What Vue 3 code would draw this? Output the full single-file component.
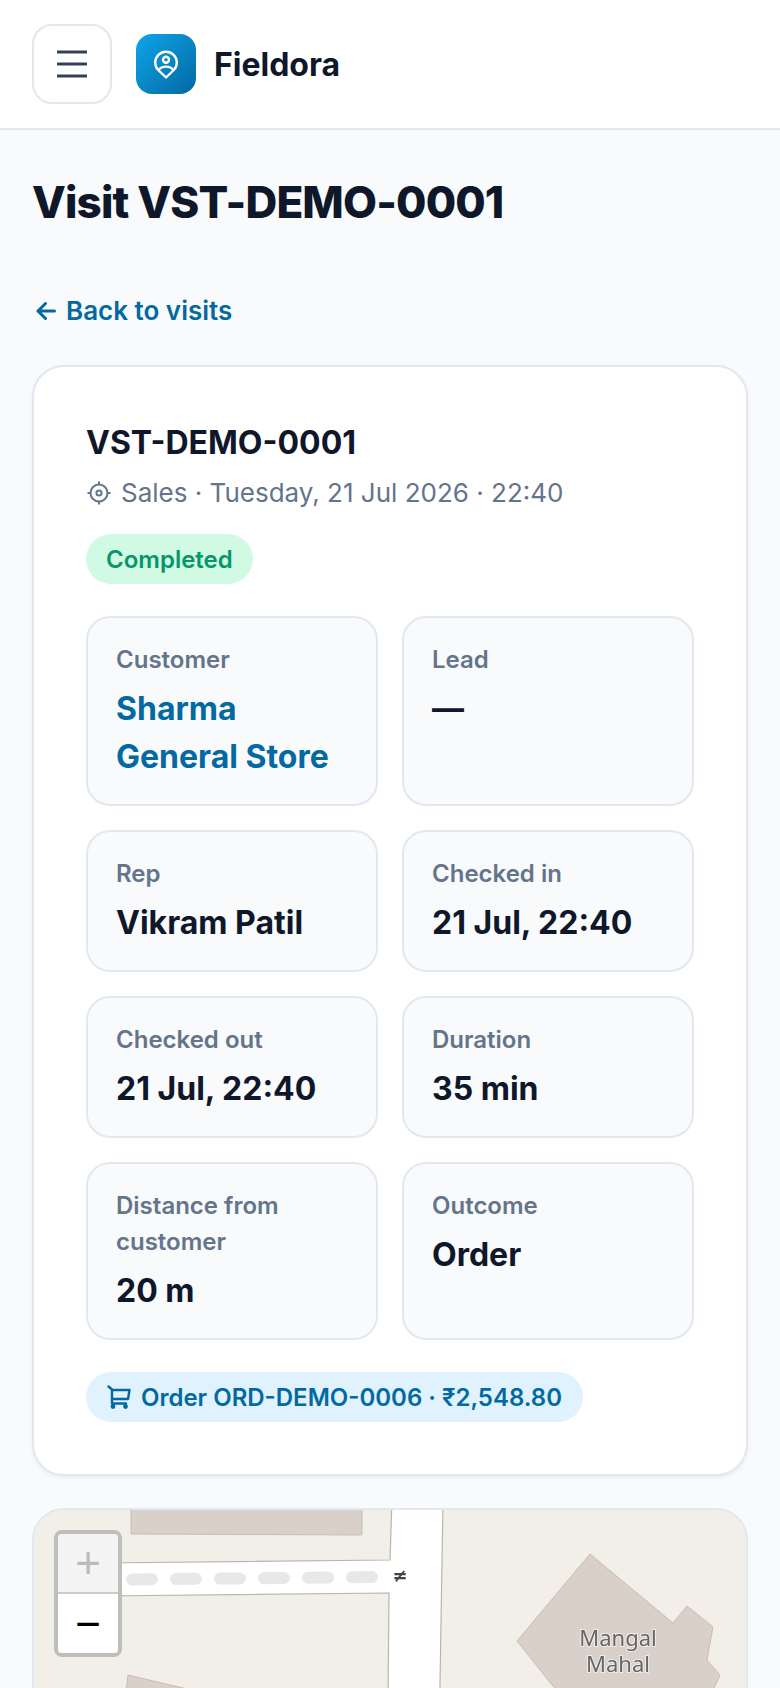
<template>
  <div class="app">
    <header class="topbar">
      <button class="menu-btn" aria-label="Menu">
        <svg width="30" height="28" viewBox="0 0 30 28">
          <path d="M0 2H30M0 14H30M0 26H30" fill="none" stroke="#334155" stroke-width="3.2" />
        </svg>
      </button>
      <div class="logo">
        <svg width="24" height="29" viewBox="0 0 24 29" fill="none" stroke="#fff" stroke-width="2.4" stroke-linejoin="round">
          <path d="M12 27.5L4.2 20A10.8 10.8 0 1 1 19.8 20Z" />
          <circle cx="12" cy="9.8" r="3" />
          <path d="M4.8 20C7.5 15.5 16.5 15.5 19.2 20" />
        </svg>
      </div>
      <span class="brand">Fieldora</span>
    </header>

    <main class="page">
      <h1 class="title">Visit VST-DEMO-0001</h1>
      <a class="back" href="#">
        <svg width="20" height="20" viewBox="0 0 20 20" fill="none" stroke="#0369a1" stroke-width="3" stroke-linecap="round" stroke-linejoin="round">
          <path d="M18.5 10H2M9.5 2.5L2 10L9.5 17.5" />
        </svg>
        Back to visits
      </a>

      <section class="card">
        <h2 class="ref">VST-DEMO-0001</h2>
        <p class="sub">
          <svg width="26" height="26" viewBox="0 0 26 26" fill="none" stroke="#64748b" stroke-width="2">
            <circle cx="13" cy="13" r="8.5" />
            <circle cx="13" cy="13" r="2.6" />
            <path d="M13 1.5V4.5M13 21.5V24.5M1.5 13H4.5M21.5 13H24.5" />
          </svg>
          Sales · Tuesday, 21 Jul 2026 · 22:40
        </p>
        <span class="status">Completed</span>

        <div class="facts">
          <div v-for="f in facts" :key="f.label" class="fact">
            <div class="fact-label">{{ f.label }}</div>
            <div class="fact-value" :class="{ link: f.link }">{{ f.value }}</div>
          </div>
        </div>

        <a class="order" href="#">
          <svg width="24" height="24" viewBox="0 0 24 24" fill="none" stroke="#0369a1" stroke-width="2.4" stroke-linecap="round" stroke-linejoin="round">
            <path d="M1.5 1.5L5 4.5V18.5H19" />
            <path d="M5 5H22.5L21 14H5" />
            <circle cx="6" cy="21.5" r="1.2" />
            <circle cx="18.5" cy="21.5" r="1.2" />
          </svg>
          Order ORD-DEMO-0006 · ₹2,548.80
        </a>
      </section>

      <section class="map">
        <svg class="tiles" width="716" height="300" viewBox="32 1508 716 300">
          <rect x="32" y="1508" width="716" height="300" fill="#f2efe9" />
          <path d="M131 1500H362V1535L131 1534Z" fill="#d9d0c9" stroke="#c9bdb3" />
          <path d="M100 1563L390 1560L392 1500H443L438 1808H387L389 1593L100 1596Z" fill="#fff" stroke="#b9b5ae" stroke-width="1.2" />
          <path d="M126 1579.5L377 1577" fill="none" stroke="#e8e8e8" stroke-width="12" stroke-linecap="round" stroke-dasharray="20 24" transform="translate(6 0)" />
          <path d="M590 1554L673 1623L687 1606L713 1627L707 1660L720 1675L700 1720H580L517 1641Z" fill="#d9d0c9" stroke="#c9bdb3" />
          <path d="M128 1675L200 1692L180 1740H120Z" fill="#d9d0c9" stroke="#c9bdb3" />
          <text x="400" y="1582" class="oneway">≠</text>
          <text x="618" y="1646" class="place">Mangal</text>
          <text x="618" y="1672" class="place">Mahal</text>
        </svg>
        <div class="zoom">
          <span class="zoom-btn off">+</span>
          <span class="zoom-btn">−</span>
        </div>
      </section>
    </main>
  </div>
</template>

<script setup>
const facts = [
  { label: 'Customer', value: 'Sharma General Store', link: true },
  { label: 'Lead', value: '—' },
  { label: 'Rep', value: 'Vikram Patil' },
  { label: 'Checked in', value: '21 Jul, 22:40' },
  { label: 'Checked out', value: '21 Jul, 22:40' },
  { label: 'Duration', value: '35 min' },
  { label: 'Distance from customer', value: '20 m' },
  { label: 'Outcome', value: 'Order' }
]
</script>

<style>
body {
  background: #f8fafc;
}
</style>

<style scoped>
.app {
  height: 1688px;
  overflow: hidden;
  font-family: Inter, "Noto Sans", sans-serif;
  color: #0f172a;
  background: #f8fafc;
}

.topbar {
  display: flex;
  align-items: center;
  height: 130px;
  box-sizing: border-box;
  padding: 0 32px;
  background: #fff;
  border-bottom: 2px solid #e2e8f0;
}

.menu-btn {
  display: flex;
  align-items: center;
  justify-content: center;
  width: 80px;
  height: 80px;
  margin-right: 24px;
  padding: 0;
  background: #fff;
  border: 2px solid #e2e8f0;
  border-radius: 20px;
}

.logo {
  display: flex;
  align-items: center;
  justify-content: center;
  width: 60px;
  height: 60px;
  margin-right: 18px;
  border-radius: 16px;
  background: linear-gradient(135deg, #0ea5e9, #0369a1);
}

.brand {
  font-size: 32px;
  font-weight: 700;
}

.page {
  padding: 0 32px;
}

.title {
  margin: 45px 0 0;
  font-size: 44px;
  line-height: 54px;
  font-weight: 800;
  letter-spacing: -0.85px;
}

.back {
  display: flex;
  align-items: center;
  gap: 10px;
  margin: 66px 0 0 4px;
  font-size: 26px;
  line-height: 32px;
  font-weight: 600;
  color: #0369a1;
  text-decoration: none;
}

.card {
  box-sizing: border-box;
  margin-top: 38px;
  padding: 53px 52px 52px;
  background: #fff;
  border: 2px solid #e2e8f0;
  border-radius: 32px;
  box-shadow: 0 2px 4px rgba(15, 23, 42, 0.06);
}

.ref {
  margin: 0;
  font-size: 32px;
  line-height: 46px;
  font-weight: 700;
}

.sub {
  display: flex;
  align-items: center;
  gap: 9px;
  margin: 7px 0 0;
  font-size: 26px;
  line-height: 40px;
  color: #64748b;
}

.status {
  display: inline-block;
  margin-top: 21px;
  padding: 0 20px;
  height: 50px;
  line-height: 52px;
  border-radius: 25px;
  font-size: 24px;
  font-weight: 600;
  color: #059669;
  background: #d1fae5;
}

.facts {
  display: grid;
  grid-template-columns: 1fr 1fr;
  gap: 24px;
  margin-top: 32px;
}

.fact {
  padding: 24px 28px 23px;
  background: #f8fafc;
  border: 2px solid #e2e8f0;
  border-radius: 24px;
}

.fact-label {
  font-size: 24px;
  line-height: 36px;
  font-weight: 600;
  color: #64748b;
}

.fact-value {
  margin-top: 7px;
  font-size: 32px;
  line-height: 48px;
  font-weight: 700;
}

.fact-value.link {
  color: #0369a1;
}

.order {
  display: inline-flex;
  align-items: center;
  gap: 10px;
  height: 50px;
  margin-top: 32px;
  padding: 0 21px;
  border-radius: 25px;
  font-size: 24px;
  font-weight: 600;
  color: #0369a1;
  background: #e0f2fe;
  text-decoration: none;
}

.map {
  position: relative;
  height: 300px;
  margin-top: 32px;
  overflow: hidden;
  border: 2px solid #e2e8f0;
  border-radius: 32px;
  background: #f2efe9;
}

.tiles {
  display: block;
  margin: -2px;
  filter: blur(0.4px);
}

.oneway {
  font-family: "DejaVu Sans", sans-serif;
  font-size: 18px;
  font-weight: 700;
  fill: #444;
  text-anchor: middle;
}

.place {
  font-family: "Noto Sans", sans-serif;
  font-size: 22px;
  fill: #666;
  stroke: #fff;
  stroke-width: 2px;
  stroke-opacity: 0.6;
  paint-order: stroke;
  text-anchor: middle;
}

.zoom {
  position: absolute;
  top: 20px;
  left: 20px;
  display: flex;
  flex-direction: column;
  width: 60px;
  border: 4px solid #bfbfb9;
  border-radius: 8px;
  overflow: hidden;
}

.zoom-btn {
  display: flex;
  align-items: center;
  justify-content: center;
  height: 59px;
  background: #fff;
  font-family: "Liberation Sans", sans-serif;
  font-size: 44px;
  font-weight: 400;
  color: #000;
}

.zoom-btn.off {
  height: 58px;
  background: #f4f4f4;
  color: #bbb;
  border-bottom: 2px solid #ccc;
}
</style>
